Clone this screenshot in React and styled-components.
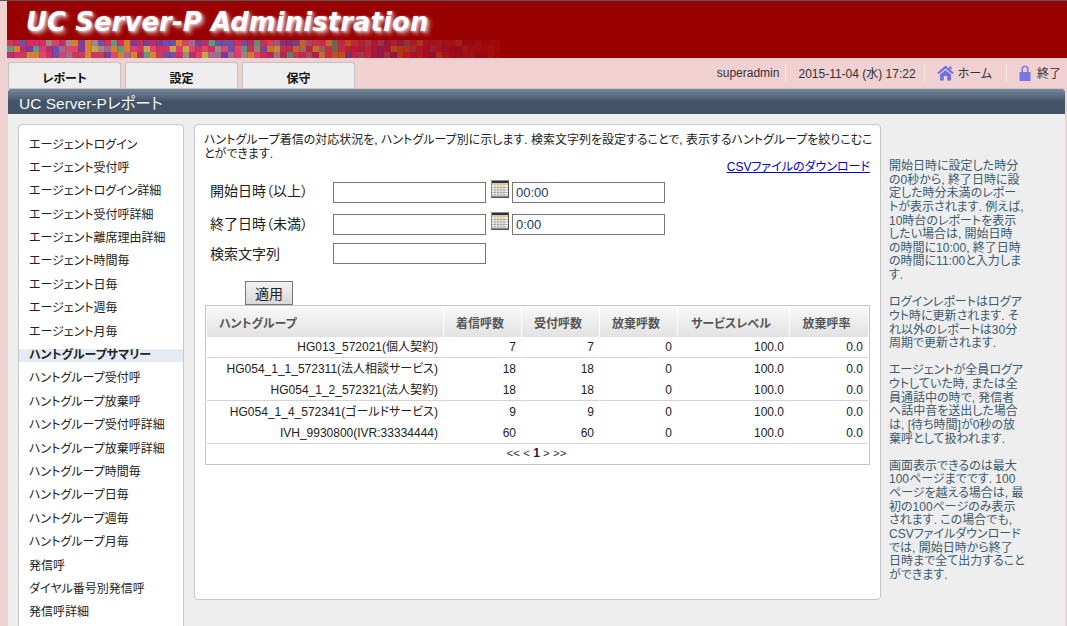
import React from "react";
import styled, { createGlobalStyle } from "styled-components";

const Global = createGlobalStyle`
  html, body { margin: 0; padding: 0; height: 626px; overflow: hidden; background: #f0d0d1; }
  body { font-family: "Liberation Sans", "Noto Sans CJK JP", sans-serif; font-size: 12px; color: #222; }
  * { box-sizing: border-box; font-feature-settings: "palt" 1; }
`;

const Page = styled.div`
  width: 1067px; height: 626px; overflow: hidden;
  border-top: 1px solid #555; padding-left: 7px;
`;
const Banner = styled.header`
  height: 57px; background: #990000; display: flex; flex-direction: column;
`;
const BannerTitle = styled.h1`
  margin: 0; height: 39px; padding: 5px 0 0 19px;
  font: italic bold 25.7px/32px "DejaVu Sans", sans-serif; color: #fff; white-space: nowrap;
  letter-spacing: 0.2px;
  text-shadow: 1px 1px 3px rgba(255,255,255,.75), 3px 3px 4px rgba(255,255,255,.5);
`;
const NavBar = styled.div`
  height: 30px; display: flex; justify-content: space-between; align-items: flex-end; padding-left: 1px;
`;
const Tabs = styled.nav`display: flex; gap: 4px;`;
const Tab = styled.div`
  width: 113px; height: 26px; background: #eeeeee; border: 1px solid #c2c2c2; border-bottom: 0;
  border-radius: 3px 3px 0 0; text-align: center; font-weight: bold; font-size: 12px; line-height: 16px; padding-top: 8px; color: #111;
`;
const Status = styled.div`
  display: flex; align-items: center; height: 17px; margin-bottom: 7px; padding-right: 6px; color: #333;
`;
const StatusItem = styled.span`
  display: flex; align-items: center; gap: 4px; height: 17px; padding: 0 ${p => p.$r ?? 8}px 0 ${p => p.$l ?? 12}px;
  border-left: ${p => (p.$first ? "0" : "1px solid #f6e6e6")}; white-space: nowrap;
`;
const LockLabel = styled.span`margin-left: 2px;`;
const Panel = styled.main`
  margin-left: 1px; width: 1057px; background: #eeeeee; height: 600px; border-top: 1px solid #c8c8c8;
`;
const PanelTitle = styled.div`
  height: 25px; background: linear-gradient(#76879c 0%, #445468 50%, #435367 100%);
  border-radius: 3px 3px 0 0; color: #f4f6fa; font-size: 15.5px; line-height: 29px; padding-left: 11px;
`;
const PanelBody = styled.div`display: flex; padding: 10px 0 0 10px; align-items: flex-start;`;
const Sidebar = styled.aside`
  width: 166px; height: 600px; background: #fff; border: 1px solid #c8c8c8; border-radius: 4px;
  padding-top: 8.5px; flex: none;
`;
const SideItem = styled.div`
  height: 23.4px; padding: 3px 0 0 10px; line-height: 16px; color: #222;
  ${p => p.$active && `font-weight: bold; background: linear-gradient(#fff 0 5px, #e4ebf5 5px 18px, #fff 18px);`}
`;
const Content = styled.section`
  width: 687px; height: 476px; margin-left: 10px; background: #fff; border: 1px solid #c8c8c8; border-radius: 4px;
  padding: 8px 10px 0 9px; flex: none;
`;
const Intro = styled.p`margin: 0; line-height: 14px; white-space: nowrap;`;
const LinkRow = styled.div`text-align: right; line-height: 14px; height: 14px; margin: -1px 0 8px;`;
const CsvLink = styled.a`color: #0000cc; text-decoration: underline; font-size: 12px;`;
const FormRow = styled.div`
  display: flex; align-items: flex-start; height: ${p => p.$h}px; padding-left: 6px;
`;
const Label = styled.label`width: 123px; font-size: 14px; line-height: ${p => p.$lh || 19}px; color: #222;`;
const Input = styled.input`
  width: ${p => p.$w || 153}px; height: 21px; border: 1px solid #767676; background: #fff; padding: 1px 3px;
  font: 13px "Liberation Sans", sans-serif; color: #1b3a6b; outline: none;
`;
const CalendarBtn = styled.span`display: block; width: 18px; height: 18px; margin: -2px 3px 0 5px;`;
const ApplyRow = styled.div`padding-left: 41px; height: 24px; margin-top: 2px; position: relative; z-index: 1;`;
const ApplyBtn = styled.button`
  width: 48px; height: 24px; border: 1px solid #777; background: linear-gradient(#f2f2f2, #d9d9d9);
  font: 14px "Liberation Sans", "Noto Sans CJK JP", sans-serif; color: #222; padding: 0;
`;
const TableBox = styled.div`
  width: 665px; height: 160px; margin: 0 0 0 1px; border: 1px solid #c4c4c4; padding: 1px;
`;
const Table = styled.table`
  border-collapse: separate; border-spacing: 0; width: 661px; table-layout: fixed;
`;
const Th = styled.th`
  height: 30px; padding: ${p => (p.$left ? "0 0 0 12px" : "0 5px 0 0")}; text-align: ${p => (p.$left ? "left" : "center")};
  font-size: 12px; font-weight: bold; color: #555;
  background: linear-gradient(#f8f8f8, #e2e2e2); border-right: 1px solid #fff;
  &:last-child { border-right: 0; }
`;
const Td = styled.td`
  height: ${p => p.$h}px; padding: 0 5px 0 0; text-align: right; color: #222; white-space: nowrap;
  font-size: 12px; line-height: 14px;
  border-bottom: ${p => (p.$sep ? "1px solid #d4d4d4" : "0")};
  border-right: 1px solid #fff;
  &:last-child { border-right: 0; }
`;
const Pager = styled.div`
  text-align: center; font-size: 11.5px; line-height: 18px; color: #333; height: 20px; padding-right: 2px;
  b { font-size: 12px; color: #222; }
`;
const Help = styled.aside`
  width: 145px; margin-left: 8px; padding-top: 36px; color: #3a5a70; line-height: 13.63px; flex: none; white-space: nowrap; font-size: 12px;
`;
const HelpPara = styled.p`margin: 0 0 13.63px;`;

function Mosaic() {
  let seed = 12345;
  const rnd = () => ((seed = (seed * 16807) % 2147483647) / 2147483647);
  const palette = ["#d22f63", "#c93a5a", "#7d3b9c", "#d7802e", "#5d9a80", "#c9a347", "#a06a8c", "#dd3e72", "#e0456a", "#9a8a80", "#b82f6a", "#6f4fa8"];
  const mix = (hex, t) => {
    const c = [1, 3, 5].map(i => parseInt(hex.slice(i, i + 2), 16));
    const r = [153, 0, 0];
    return `rgb(${c.map((v, i) => Math.round(v + (r[i] - v) * t)).join(",")})`;
  };
  const rects = [];
  for (let row = 0; row < 3; row++) {
    for (let col = 0; col < 76; col++) {
      const f = col / 76;
      const fade = f < 0.45 ? 0 : Math.min(0.9, (f - 0.45) * 1.75);
      rects.push(
        <rect key={`${row}-${col}`} x={col * 6.5} y={row * 6} width="6.6" height="6.1"
          fill={mix(palette[Math.floor(rnd() * palette.length)], fade)} />
      );
    }
  }
  return <svg width="493" height="18" viewBox="0 0 493 18" style={{ display: "block" }}>{rects}</svg>;
}

const HomeIcon = () => (
  <svg width="17" height="16" viewBox="0 0 17 16">
    <path d="M8.5 0.5 L17 8 L15 9 L8.5 3.5 L2 9 L0 8 Z M12 1.5h2.5v3.5L12 3Z" fill="#6f6fe0" />
    <path d="M8.5 5 L14 9.5 V15.5 H10.2 V11 H6.8 V15.5 H3 V9.5 Z" fill="#6f6fe0" />
  </svg>
);
const LockIcon = () => (
  <svg width="12" height="16" viewBox="0 0 12 16">
    <path d="M2.5 7 V4 a3.5 3.2 0 0 1 7 0 V7 H8 V4 a2 2 0 0 0 -4 0 V7 Z" fill="#7676e4" />
    <rect x="0.5" y="7" width="11" height="9" rx="0.5" fill="#7676e4" />
  </svg>
);
const CalendarIcon = () => (
  <svg width="18" height="18" viewBox="0 0 18 18">
    <rect x="0.5" y="0.5" width="17" height="16" fill="#f2f0e8" stroke="#8a8a8a" />
    <rect x="1" y="1" width="16" height="2" fill="#1f2a80" />
    <rect x="1" y="3" width="16" height="2" fill="#f4cc50" />
    <path d="M1 7.5h16M1 10h16M1 12.5h16M1 15h16M4 5v11M7 5v11M10 5v11M13 5v11" stroke="#a8a8a8" strokeWidth="0.8" />
    <path d="M0 17.5h18M17.5 1v17" stroke="#555" />
  </svg>
);

const menu = ["エージェントログイン","エージェント受付呼","エージェントログイン詳細","エージェント受付呼詳細","エージェント離席理由詳細","エージェント時間毎","エージェント日毎","エージェント週毎","エージェント月毎","ハントグループサマリー","ハントグループ受付呼","ハントグループ放棄呼","ハントグループ受付呼詳細","ハントグループ放棄呼詳細","ハントグループ時間毎","ハントグループ日毎","ハントグループ週毎","ハントグループ月毎","発信呼","ダイヤル番号別発信呼","発信呼詳細"];
const rows = [
  ["HG013_572021(個人契約)","7","7","0","100.0","0.0",true,21],
  ["HG054_1_1_572311(法人相談サービス)","18","18","0","100.0","0.0",false,21],
  ["HG054_1_2_572321(法人契約)","18","18","0","100.0","0.0",true,22],
  ["HG054_1_4_572341(ゴールドサービス)","9","9","0","100.0","0.0",false,21],
  ["IVH_9930800(IVR:33334444)","60","60","0","100.0","0.0",true,22],
];
const help = [
  ["開始日時に設定した時分","の0秒から, 終了日時に設","定した時分未満のレポー","トが表示されます. 例えば,","10時台のレポートを表示","したい場合は, 開始日時","の時間に10:00, 終了日時","の時間に11:00と入力しま","す."],
  ["ログインレポートはログア","ウト時に更新されます. そ","れ以外のレポートは30分","周期で更新されます."],
  ["エージェントが全員ログア","ウトしていた時, または全","員通話中の時で, 発信者","へ話中音を送出した場合","は, [待ち時間]が0秒の放","棄呼として扱われます."],
  ["画面表示できるのは最大","100ページまでです. 100","ページを越える場合は, 最","初の100ページのみ表示","されます. この場合でも,","CSVファイルダウンロード","では, 開始日時から終了","日時まで全て出力すること","ができます."],
];

export default function App() {
  return (
    <Page>
      <Global />
      <Banner>
        <BannerTitle>UC Server-P Administration</BannerTitle>
        <Mosaic />
      </Banner>
      <NavBar>
        <Tabs>
          <Tab>レポート</Tab>
          <Tab>設定</Tab>
          <Tab>保守</Tab>
        </Tabs>
        <Status>
          <StatusItem $first $r={6}>superadmin</StatusItem>
          <StatusItem>2015-11-04 (水) 17:22</StatusItem>
          <StatusItem $r={14}><HomeIcon />ホーム</StatusItem>
          <StatusItem $r={0} $l={12}><LockIcon /><LockLabel>終了</LockLabel></StatusItem>
        </Status>
      </NavBar>
      <Panel>
        <PanelTitle>UC Server-Pレポート</PanelTitle>
        <PanelBody>
          <Sidebar>
            {menu.map((m, i) => <SideItem key={m} $active={i === 9}>{m}</SideItem>)}
          </Sidebar>
          <Content>
            <Intro>ハントグループ着信の対応状況を, ハントグループ別に示します. 検索文字列を設定することで, 表示するハントグループを絞りこむこ<br />とができます.</Intro>
            <LinkRow><CsvLink href="#">CSVファイルのダウンロード</CsvLink></LinkRow>
            <FormRow $h={32}>
              <Label>開始日時（以上）</Label>
              <Input />
              <CalendarBtn><CalendarIcon /></CalendarBtn>
              <Input defaultValue="00:00" />
            </FormRow>
            <FormRow $h={29}>
              <Label $lh={20}>終了日時（未満）</Label>
              <Input />
              <CalendarBtn><CalendarIcon /></CalendarBtn>
              <Input defaultValue="0:00" />
            </FormRow>
            <FormRow $h={36}>
              <Label $lh={22}>検索文字列</Label>
              <Input />
            </FormRow>
            <ApplyRow><ApplyBtn>適用</ApplyBtn></ApplyRow>
            <TableBox>
              <Table>
                <colgroup>
                  <col style={{ width: 237 }} /><col style={{ width: 78 }} /><col style={{ width: 78 }} /><col style={{ width: 78 }} /><col style={{ width: 112 }} /><col style={{ width: 78 }} />
                </colgroup>
                <thead>
                  <tr>
                    <Th $left>ハントグループ</Th><Th>着信呼数</Th><Th>受付呼数</Th><Th>放棄呼数</Th><Th>サービスレベル</Th><Th>放棄呼率</Th>
                  </tr>
                </thead>
                <tbody>
                  {rows.map(r => (
                    <tr key={r[0]}>
                      {r.slice(0, 6).map((c, i) => <Td key={i} $sep={r[6]} $h={r[7]}>{c}</Td>)}
                    </tr>
                  ))}
                </tbody>
              </Table>
              <Pager>&lt;&lt; &lt; <b>1</b> &gt; &gt;&gt;</Pager>
            </TableBox>
          </Content>
          <Help>
            {help.map((p, i) => (
              <HelpPara key={i}>{p.map((l, j) => <React.Fragment key={j}>{l}<br /></React.Fragment>)}</HelpPara>
            ))}
          </Help>
        </PanelBody>
      </Panel>
    </Page>
  );
}
